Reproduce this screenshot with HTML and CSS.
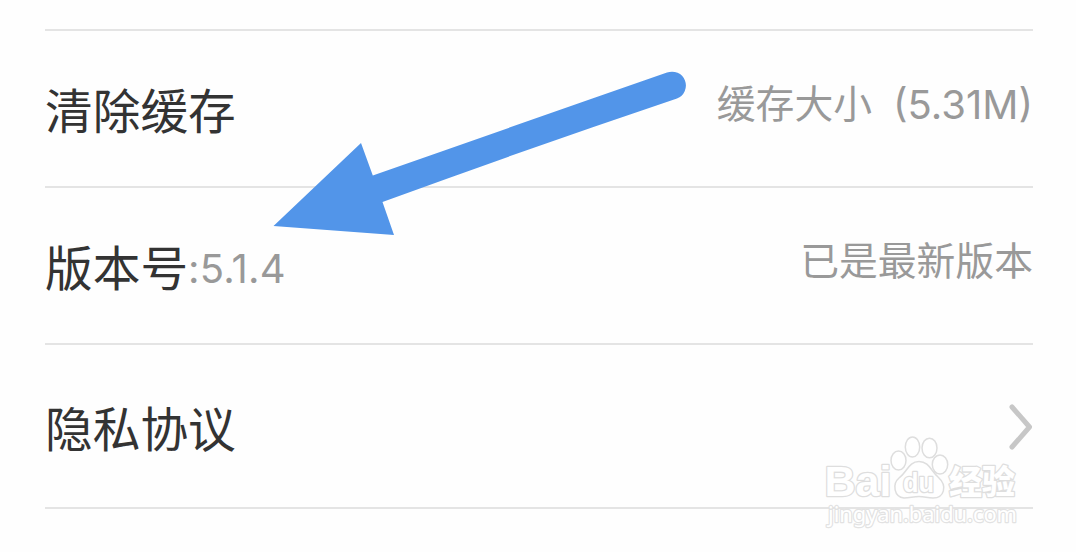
FILE: index.html
```html
<!DOCTYPE html>
<html lang="zh-CN">
<head>
<meta charset="utf-8">
<title>设置</title>
<link rel="stylesheet" href="styles.css">
</head>
<body>
<main class="settings">
  <section class="row">
    <div class="label">清除缓存</div>
    <div class="value"><span>缓存大小</span><span class="size">(5.31M)</span></div>
  </section>
  <section class="row">
    <div class="label">版本号<span class="version">:5.1.4</span></div>
    <div class="value">已是最新版本</div>
  </section>
  <section class="row row-last">
    <div class="label">隐私协议</div>
    <svg class="chevron" width="26" height="48" viewBox="0 0 26 48"><path d="M5 4 22.500 24 5 44"/></svg>
  </section>
</main>
<svg class="arrow" width="420" height="170" viewBox="270 68 420 170">
  <path d="M273.500 226 361 143 372.800 175.500Q515 125.500 667 72.600A13.800 13.800 0 0 1 677 98.500Q530 148 382.500 202L394 235Z"/>
</svg>
<svg class="watermark" width="204" height="100" viewBox="820 432 204 100">
  <g class="outline">
    <text class="site" x="828" y="522" textLength="189" lengthAdjust="spacingAndGlyphs">jingyan.baidu.com</text>
    <text class="brand" x="824.500" y="496" textLength="67" lengthAdjust="spacingAndGlyphs">Bai</text>
    <text class="cjk" x="949" y="494" textLength="66" lengthAdjust="spacingAndGlyphs">经验</text>
    <ellipse cx="898.500" cy="460.500" rx="7.500" ry="9.500"/>
    <ellipse cx="912.500" cy="447" rx="7.200" ry="10"/>
    <ellipse cx="929.500" cy="448" rx="7.500" ry="9.800"/>
    <ellipse cx="940" cy="464.500" rx="7.700" ry="9.500"/>
    <path d="M919 461.500C929 461.500 931 471 938 477C948 486 944 498 933 498C927 498 925 496.500 919 496.500S910 498 904 498C894 497 892 484 899 478C907 472 909 461.500 919 461.500Z"/>
    <text class="du" x="903" y="491.500" textLength="31" lengthAdjust="spacingAndGlyphs">du</text>
  </g>
</svg>
</body>
</html>
```
FILE: styles.css
```css
body {
  margin: 0;
  width: 1076px;
  height: 552px;
  overflow: hidden;
  position: relative;
  background: #fefefe;
  font-family: Inter, "Noto Sans CJK SC", sans-serif;
}
.settings {
  margin: 29px 43px 0 45px;
  border-top: 2px solid #e4e4e4;
}
.row {
  display: flex;
  justify-content: space-between;
  box-sizing: border-box;
  height: 157px;
  padding-top: 44px;
  border-bottom: 2px solid #e4e4e4;
}
.row-last {
  height: 164px;
  padding-top: 48px;
}
.label {
  display: flex;
  margin-top: 1px;
  font-size: 47.700px;
  line-height: 72px;
  color: #333;
  white-space: nowrap;
}
.version {
  font-size: 40px;
  letter-spacing: 0.200px;
  color: #999;
}
.value {
  display: flex;
  gap: 21px;
  font-size: 38.800px;
  line-height: 58px;
  color: #999;
  white-space: nowrap;
}
.size {
  padding-top: 1px;
  font-size: 40px;
}
.chevron {
  margin-top: 10px;
}
.chevron path {
  fill: none;
  stroke: #c7c7c7;
  stroke-width: 5;
  stroke-linecap: round;
  stroke-linejoin: round;
}
.arrow {
  position: absolute;
  left: 270px;
  top: 68px;
  fill: #5295e9;
}
.watermark {
  position: absolute;
  left: 820px;
  top: 432px;
}
.outline {
  fill: #fff;
  stroke: #dedede;
  stroke-width: 1.500px;
  stroke-linejoin: round;
}
.outline text {
  paint-order: stroke;
  stroke-width: 2.600px;
}
.outline .brand {
  font: 700 43px "Liberation Sans", sans-serif;
}
.outline .du {
  font: 700 27px "Liberation Sans", sans-serif;
}
.outline .cjk {
  font: 900 33px "Noto Sans CJK SC", sans-serif;
}
.outline .site {
  font: 400 22px "Noto Sans", sans-serif;
  stroke: #e2e2e2;
  stroke-width: 2.400px;
}
```
